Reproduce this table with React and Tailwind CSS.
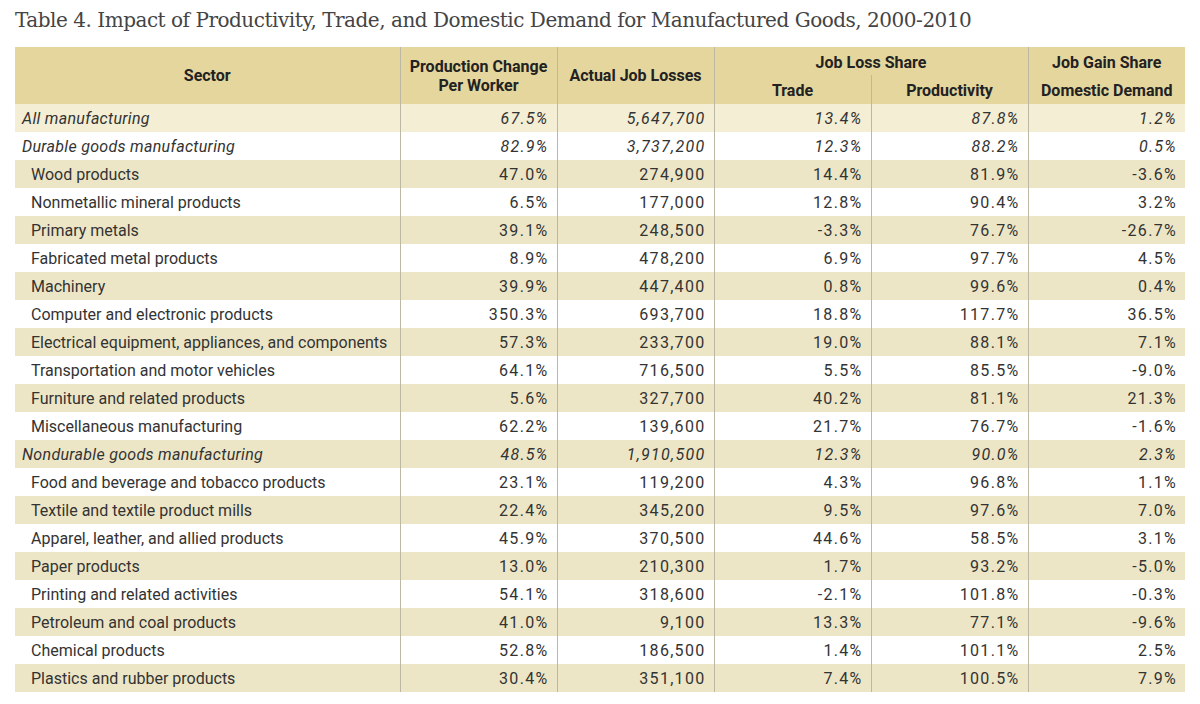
const rows = [
  { name: "All manufacturing", v: ["67.5%", "5,647,700", "13.4%", "87.8%", "1.2%"], italic: true, first: true },
  { name: "Durable goods manufacturing", v: ["82.9%", "3,737,200", "12.3%", "88.2%", "0.5%"], italic: true },
  { name: "Wood products", v: ["47.0%", "274,900", "14.4%", "81.9%", "-3.6%"] },
  { name: "Nonmetallic mineral products", v: ["6.5%", "177,000", "12.8%", "90.4%", "3.2%"] },
  { name: "Primary metals", v: ["39.1%", "248,500", "-3.3%", "76.7%", "-26.7%"] },
  { name: "Fabricated metal products", v: ["8.9%", "478,200", "6.9%", "97.7%", "4.5%"] },
  { name: "Machinery", v: ["39.9%", "447,400", "0.8%", "99.6%", "0.4%"] },
  { name: "Computer and electronic products", v: ["350.3%", "693,700", "18.8%", "117.7%", "36.5%"] },
  { name: "Electrical equipment, appliances, and components", v: ["57.3%", "233,700", "19.0%", "88.1%", "7.1%"] },
  { name: "Transportation and motor vehicles", v: ["64.1%", "716,500", "5.5%", "85.5%", "-9.0%"] },
  { name: "Furniture and related products", v: ["5.6%", "327,700", "40.2%", "81.1%", "21.3%"] },
  { name: "Miscellaneous manufacturing", v: ["62.2%", "139,600", "21.7%", "76.7%", "-1.6%"] },
  { name: "Nondurable goods manufacturing", v: ["48.5%", "1,910,500", "12.3%", "90.0%", "2.3%"], italic: true },
  { name: "Food and beverage and tobacco products", v: ["23.1%", "119,200", "4.3%", "96.8%", "1.1%"] },
  { name: "Textile and textile product mills", v: ["22.4%", "345,200", "9.5%", "97.6%", "7.0%"] },
  { name: "Apparel, leather, and allied products", v: ["45.9%", "370,500", "44.6%", "58.5%", "3.1%"] },
  { name: "Paper products", v: ["13.0%", "210,300", "1.7%", "93.2%", "-5.0%"] },
  { name: "Printing and related activities", v: ["54.1%", "318,600", "-2.1%", "101.8%", "-0.3%"] },
  { name: "Petroleum and coal products", v: ["41.0%", "9,100", "13.3%", "77.1%", "-9.6%"] },
  { name: "Chemical products", v: ["52.8%", "186,500", "1.4%", "101.1%", "2.5%"] },
  { name: "Plastics and rubber products", v: ["30.4%", "351,100", "7.4%", "100.5%", "7.9%"] },
];

export default function App() {
  return (
    <div className="w-[1200px] h-[704px] bg-white px-[15px] pt-[6px]" style={{ fontFamily: "Roboto, sans-serif" }}>
      <h1 className="text-[20px] leading-[28px] text-[#444] tracking-[-0.48px]" style={{ fontFamily: "'DejaVu Serif', serif" }}>
        Table 4. Impact of Productivity, Trade, and Domestic Demand for Manufactured Goods, 2000-2010
      </h1>
      <table className="mt-[13px] w-[1170px] border-collapse table-fixed text-[16px] text-[#333]">
        <colgroup>
          <col className="w-[385px]" />
          <col className="w-[157px]" />
          <col className="w-[157px]" />
          <col className="w-[157px]" />
          <col className="w-[157px]" />
          <col className="w-[157px]" />
        </colgroup>
        <thead className="bg-[#e5d69e] font-bold text-[#222] leading-[19px]">
          <tr className="h-[28px]">
            <th rowSpan={2} className="font-bold">Sector</th>
            <th rowSpan={2} className="border-l border-[#bdb8a4] font-bold">Production Change<br />Per Worker</th>
            <th rowSpan={2} className="border-l border-[#bdb8a4] font-bold">Actual Job Losses</th>
            <th colSpan={2} className="border-l border-[#bdb8a4] font-bold pt-[2px]">Job Loss Share</th>
            <th className="border-l border-[#bdb8a4] font-bold pt-[2px]">Job Gain Share</th>
          </tr>
          <tr className="h-[29px]">
            <th className="border-l border-[#bdb8a4] font-bold pt-[2px]">Trade</th>
            <th className="border-l border-[#bdb8a4] font-bold pt-[2px]">Productivity</th>
            <th className="border-l border-[#bdb8a4] font-bold pt-[2px]">Domestic Demand</th>
          </tr>
        </thead>
        <tbody>
          {rows.map((r, i) => (
            <tr
              key={r.name}
              className={`h-[28px] ${r.first ? "bg-[#f3eed4]" : i % 2 === 0 ? "bg-[#ede6c6]" : "bg-white"} ${r.italic ? "italic" : ""}`}
            >
              <td className={r.italic ? "pl-[7px] pt-[1px] tracking-[0.3px]" : "pl-[16px] pt-[1px]"}>{r.name}</td>
              {r.v.map((v, j) => (
                <td key={j} className="border-l border-[#bdb8a4] text-right pr-[8px] pt-[1px] tracking-[1.3px]">{v}</td>
              ))}
            </tr>
          ))}
        </tbody>
      </table>
    </div>
  );
}
